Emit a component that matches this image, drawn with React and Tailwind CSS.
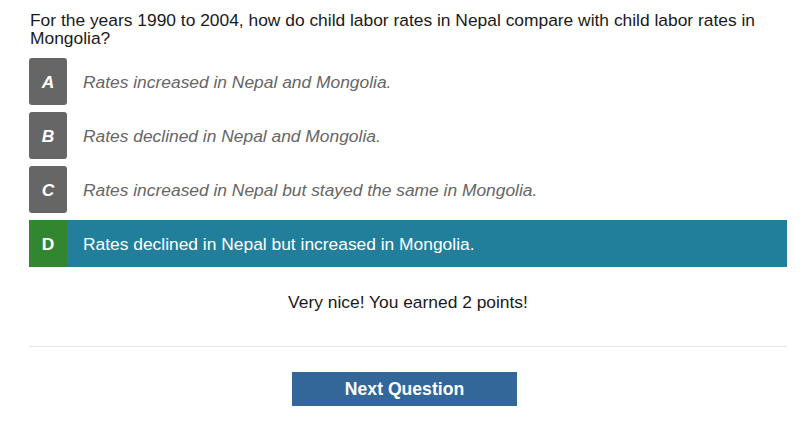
import React from 'react';

const options = [
  { letter: 'A', text: 'Rates increased in Nepal and Mongolia.' },
  { letter: 'B', text: 'Rates declined in Nepal and Mongolia.' },
  { letter: 'C', text: 'Rates increased in Nepal but stayed the same in Mongolia.' },
  { letter: 'D', text: 'Rates declined in Nepal but increased in Mongolia.', correct: true },
];

function Option({ letter, text, correct }) {
  if (correct) {
    return (
      <div className="flex h-[47px] items-center bg-[#217f9b]">
        <div className="flex h-full w-[38px] items-center justify-center bg-[#32862f] font-bold text-white">
          {letter}
        </div>
        <span className="ml-[16px] text-white">{text}</span>
      </div>
    );
  }
  return (
    <div className="flex h-[47px] items-center">
      <div className="flex h-full w-[38px] items-center justify-center rounded-[3px] bg-[#666666] font-bold italic text-white">
        {letter}
      </div>
      <span className="ml-[16px] italic text-[#666666]">{text}</span>
    </div>
  );
}

export default function App() {
  return (
    <div className="min-h-screen w-full bg-white font-['Liberation_Sans',Arial,sans-serif] text-[17.4px] leading-[20px] text-[#222]">
      <div className="ml-[29px] w-[758px] pt-[11px]">
        <p className="pl-px pr-[20px] leading-[18px] text-[#1a1a1a]">
          For the years 1990 to 2004, how do child labor rates in Nepal compare with child labor rates in Mongolia?
        </p>

        {/* Answer choices */}
        <div className="mt-[11px] flex flex-col gap-[7px]">
          {options.map((o) => (
            <Option key={o.letter} {...o} />
          ))}
        </div>

        <p className="mt-[25px] text-center text-[#1a1a1a]">
          Very nice! You earned 2 points!
        </p>

        <div className="mt-[34px] h-px bg-[#e6e6e6]" />

        <button className="ml-[263px] mt-[25px] flex h-[34px] w-[225px] items-center justify-center bg-[#336699] text-[17.6px] font-bold text-white">
          Next Question
        </button>
      </div>
    </div>
  );
}
